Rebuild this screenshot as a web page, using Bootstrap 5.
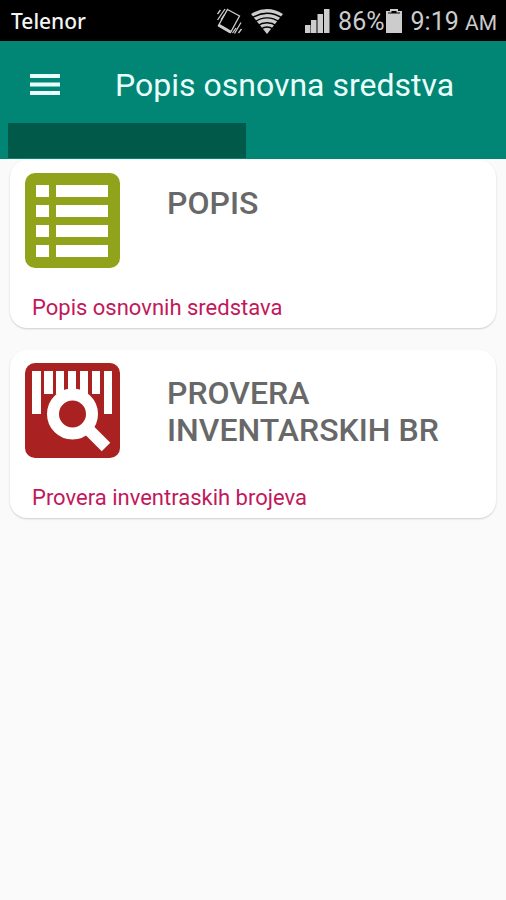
<!DOCTYPE html>
<html lang="sr-Latn">
<head>
<meta charset="utf-8">
<meta name="viewport" content="width=device-width, initial-scale=1">
<title>Popis osnovna sredstva</title>
<link href="https://cdn.jsdelivr.net/npm/bootstrap@5.3.0/dist/css/bootstrap.min.css" rel="stylesheet">
<style>
  body { background: #fafafa; font-family: Roboto, sans-serif; }
  .status-bar { background: #000; color: #ccc; height: 41px; padding: 0 9px 0 11px; }
  .carrier { color: #f4f4f4; font: 500 21px/30px "Noto Sans", sans-serif; }
  .status-text { font-size: 25px; line-height: 30px; padding-top: 2px; }
  .meridiem { font-size: 21px; line-height: 1; }
  .app-bar { background: #018675; color: #e9fffb; }
  .title-row { height: 82px; padding: 6px 22px 0; }
  .app-title { font-size: 32px; line-height: 40px; margin-left: 47px; }
  .menu-btn { color: inherit; padding: 8px; border: 0; }
  .tab-strip { width: 47%; height: 35px; margin-left: 8px; background: #01594a; }
  .app-bar-edge { height: 1px; }
  .card-list { padding: 1px 10px 22px; gap: 22px; }
  .item-card { border: 0; border-radius: 17px; padding: 13px 15px 6px; min-height: 168px; box-shadow: 0 1px 2px rgba(0, 0, 0, .18); }
  .item-head { gap: 47px; }
  .item-title { color: #686868; font-size: 32px; line-height: 37px; font-weight: 500; padding-top: 12px; }
  .item-note { color: #c2185b; font-size: 22px; line-height: 28px; padding-left: 7px; }
</style>
<script src="https://cdn.jsdelivr.net/npm/bootstrap@5.3.0/dist/js/bootstrap.bundle.min.js"></script>
</head>
<body>
<div class="status-bar d-flex align-items-center justify-content-between">
  <span class="carrier">Telenor</span>
  <div class="d-flex align-items-center">
    <svg class="me-2" width="26" height="28" viewBox="0 0 26 28" fill="none" stroke="#ccc" stroke-width="1.300" aria-hidden="true">
      <path d="M11.500 2.500L23.500 9L14.500 25.500L2.500 18.500Z"/><path d="M2.500 18L14.500 25" stroke-width="3"/>
      <path d="M1.500 7L4.500 3M1.500 13L9 2M5 12.500L8.500 7.500M16.500 26L20 21M18.500 26.500L25 15.500M22.500 26L25.500 22"/>
    </svg>
    <svg class="me-3" width="34" height="28" viewBox="0 0 34 28" aria-hidden="true">
      <path d="M1 7Q17-3 33 7L17 27Z" fill="#ccc"/>
      <path d="M1 11.500Q17 1 33 11.500M4 15.200Q17 6.500 30 15.200M7 19Q17 12.500 27 19M11 22Q17 18 23 22" fill="none" stroke="#000" stroke-width="1.400"/>
    </svg>
    <svg class="ms-1 me-2" width="26" height="26" viewBox="0 0 26 26" fill="#ccc" aria-hidden="true">
      <path d="M1 17h5.500v8H1zM7 12h5.500v13H7zM13.500 6H19v19h-5.500zM20 1h5.500v24H20z"/>
    </svg>
    <span class="status-text">86%</span>
    <svg width="18" height="26" viewBox="0 0 18 26" aria-hidden="true">
      <path d="M5 1h8v2h4v22H1V3h4z" fill="#ccc"/><path d="M3 5.500V4.500H6.500V3H11.500V4.500H15V5.500Z" fill="#000"/>
    </svg>
    <span class="status-text ms-2">9:19 <span class="meridiem">AM</span></span>
  </div>
</div>
<header class="app-bar">
  <div class="title-row d-flex align-items-center">
    <button class="menu-btn btn d-flex" type="button" aria-label="Meni">
      <svg width="30" height="22" viewBox="0 0 30 22" fill="currentColor" aria-hidden="true"><path d="M0 0h30v4H0zM0 8.500h30v4H0zM0 17h30v4H0z"/></svg>
    </button>
    <h1 class="app-title mb-0 fw-normal text-nowrap">Popis osnovna sredstva</h1>
  </div>
  <div class="tab-strip"></div>
  <div class="app-bar-edge"></div>
</header>
<main class="card-list d-flex flex-column">
  <article class="item-card card justify-content-between">
    <div class="item-head d-flex align-items-start">
      <svg class="flex-shrink-0" width="95" height="95" viewBox="0 0 95 95" aria-hidden="true">
        <rect width="95" height="95" rx="10" fill="#90a31b"/>
        <path d="M11 12h13v12H11zM31 12h52v12H31zM11 32h13v12H11zM31 32h52v12H31zM11 52h13v12H11zM31 52h52v12H31zM11 72h13v12H11zM31 72h52v12H31z" fill="#fff"/>
      </svg>
      <h2 class="item-title mb-0">POPIS</h2>
    </div>
    <p class="item-note mb-0">Popis osnovnih sredstava</p>
  </article>
  <article class="item-card card justify-content-between">
    <div class="item-head d-flex align-items-start">
      <svg class="flex-shrink-0" width="95" height="95" viewBox="0 0 95 95" aria-hidden="true">
        <rect width="95" height="95" rx="10" fill="#a92120"/>
        <path d="M7 8h9v43H7zM19 8h9v23h-9zM31 8h8v23h-8zM43 8h8v20h-8zM55 8h8v23h-8zM67 8h8v23h-8zM79 8h8v43h-8z" fill="#fff"/>
        <circle cx="47.500" cy="51" r="19.500" fill="#a92120" stroke="#fff" stroke-width="12"/>
        <path d="M64 67L81 84" stroke="#fff" stroke-width="12"/>
      </svg>
      <h2 class="item-title mb-0">PROVERA INVENTARSKIH BR</h2>
    </div>
    <p class="item-note mb-0">Provera inventraskih brojeva</p>
  </article>
</main>
</body>
</html>
